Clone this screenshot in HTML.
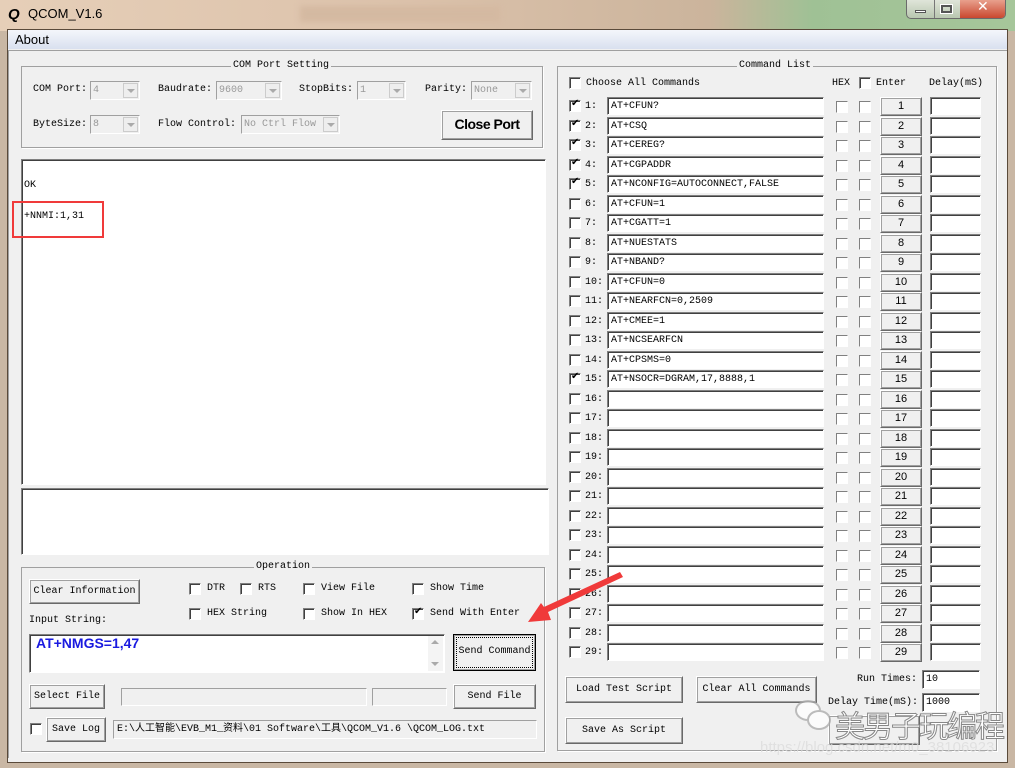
<!DOCTYPE html>
<html><head><meta charset="utf-8"><style>
*{margin:0;padding:0;box-sizing:border-box}
html,body{width:1015px;height:768px;overflow:hidden}
body{background:#c9b7a4;font-family:"Liberation Mono","WenQuanYi Zen Hei",monospace;font-size:10px;color:#000;position:relative}
.a{position:absolute;white-space:nowrap}
.grp{position:absolute;border:1px solid #a0a0a0;box-shadow:1px 1px 0 #fff}
.gt{position:absolute;top:-7px;background:#f0f0f0;padding:0 2px;line-height:12px;white-space:nowrap}
.btn{position:absolute;background:#f0f0f0;border:1px solid;border-color:#fff #696969 #696969 #fff;box-shadow:1px 1px 0 #a0a0a0 inset,inset -1px -1px 0 #a0a0a0;text-align:center;font-size:10px;white-space:nowrap}
.cb{position:absolute;width:12px;height:12px;background:#fff;border:1px solid;border-color:#808080 #fff #fff #808080;box-shadow:inset 1px 1px 0 #404040}
.cb.k::after{content:"✔";position:absolute;left:1px;top:-3px;font-size:10px;font-family:"DejaVu Sans"}
.tx{position:absolute;background:#fff;border:1px solid;border-color:#808080 #fff #fff #808080;box-shadow:inset 1px 1px 0 #404040;padding-left:3px;line-height:17px;white-space:nowrap;overflow:hidden}
.cmb{position:absolute;background:#f0f0f0;border:1px solid;border-color:#a0a0a0 #fff #fff #a0a0a0;color:#999;padding-left:2px;line-height:17px}
.cmb i{position:absolute;right:1px;top:1px;width:15px;height:15px;border:1px solid #ccc;background:#eee}
.cmb i::after{content:"";position:absolute;left:3px;top:5px;border:4px solid transparent;border-top:4px solid #aaa}
</style></head><body>
<div class="a" style="left:0;top:0;width:1015px;height:31px;background:linear-gradient(90deg,#e6cfb8,#dcc2ab 40%,#cbb49c 70%,#9fc195 80%,#a6c69a)"></div>
<div class="a" style="left:300px;top:6px;width:200px;height:16px;background:#d4b9a1;filter:blur(3px)"></div>
<div class="a" style="left:8px;top:6px;font:bold italic 15px 'Liberation Sans';color:#000">Q</div>
<div class="a" style="left:28px;top:6px;font:13px 'Liberation Sans',sans-serif">QCOM_V1.6</div>
<div class="a" style="left:906px;top:0;width:100px;height:19px;border:1px solid #6b6b6b;border-top:none;border-radius:0 0 5px 5px;background:linear-gradient(#dfe5d9,#b9c7b0);overflow:hidden">
<div class="a" style="left:27px;top:0;width:1px;height:19px;background:#777"></div>
<div class="a" style="left:53px;top:0;width:47px;height:19px;background:linear-gradient(#e8a08d,#c8432a)"></div>
<div class="a" style="left:8px;top:10px;width:11px;height:3px;background:#fff;border:1px solid #555"></div>
<div class="a" style="left:34px;top:5px;width:11px;height:8px;border:2px solid #555;outline:1px solid #fff"></div>
<div class="a" style="left:70px;top:-1px;color:#fff;font:bold 14px 'DejaVu Sans'">✕</div>
</div>
<div class="a" style="left:7px;top:29px;width:1001px;height:734px;border:1px solid #5a4a3a;background:#f0f0f0"></div>
<div class="a" style="left:8px;top:30px;width:999px;height:19px;background:linear-gradient(#f4f6fb,#d9e0ef)"></div>
<div class="a" style="left:15px;top:32px;font:13px 'Liberation Sans',sans-serif">About</div>
<div class="a" style="left:8px;top:50px;width:999px;height:708px;border-top:1px solid #a0a0a0;border-left:1px solid #a0a0a0;background:#f0f0f0"></div>

<div class="grp" style="left:21px;top:66px;width:522px;height:82px"><div class="gt" style="left:209px">COM Port Setting</div></div>
<div class="a" style="left:33px;top:84px">COM Port:</div>
<div class="cmb" style="left:90px;top:81px;width:50px;height:19px">4<i></i></div>
<div class="a" style="left:158px;top:84px">Baudrate:</div>
<div class="cmb" style="left:216px;top:81px;width:66px;height:19px">9600<i></i></div>
<div class="a" style="left:299px;top:84px">StopBits:</div>
<div class="cmb" style="left:357px;top:81px;width:49px;height:19px">1<i></i></div>
<div class="a" style="left:425px;top:84px">Parity:</div>
<div class="cmb" style="left:471px;top:81px;width:61px;height:19px">None<i></i></div>
<div class="a" style="left:33px;top:119px">ByteSize:</div>
<div class="cmb" style="left:90px;top:115px;width:50px;height:19px">8<i></i></div>
<div class="a" style="left:158px;top:119px">Flow Control:</div>
<div class="cmb" style="left:241px;top:115px;width:99px;height:19px">No Ctrl Flow<i></i></div>
<div class="btn" style="left:441px;top:110px;width:92px;height:30px;font:bold 14px 'Liberation Sans',sans-serif;line-height:27px;letter-spacing:-0.5px">Close Port</div>

<div class="tx" style="left:21px;top:159px;width:525px;height:326px"></div>
<div class="a" style="left:24px;top:180px">OK</div>
<div class="a" style="left:24px;top:211px">+NNMI:1,31</div>
<div class="a" style="left:12px;top:201px;width:92px;height:37px;border:2px solid #f03a3a"></div>
<div class="tx" style="left:21px;top:488px;width:528px;height:67px"></div>

<div class="grp" style="left:21px;top:567px;width:524px;height:185px"><div class="gt" style="left:232px">Operation</div></div>
<div class="btn" style="left:29px;top:579px;width:111px;height:25px;line-height:23px">Clear Information</div>
<div class="cb" style="left:189px;top:583px"></div><div class="a" style="left:207px;top:583px">DTR</div>
<div class="cb" style="left:240px;top:583px"></div><div class="a" style="left:258px;top:583px">RTS</div>
<div class="cb" style="left:303px;top:583px"></div><div class="a" style="left:321px;top:583px">View File</div>
<div class="cb" style="left:412px;top:583px"></div><div class="a" style="left:430px;top:583px">Show Time</div>
<div class="cb" style="left:189px;top:608px"></div><div class="a" style="left:207px;top:608px">HEX String</div>
<div class="cb" style="left:303px;top:608px"></div><div class="a" style="left:321px;top:608px">Show In HEX</div>
<div class="cb k" style="left:412px;top:608px"></div><div class="a" style="left:430px;top:608px">Send With Enter</div>
<div class="a" style="left:29px;top:615px">Input String:</div>
<div class="tx" style="left:29px;top:634px;width:416px;height:39px;line-height:20px;font:bold 14px 'Liberation Sans',sans-serif;color:#1a1ae0;padding-left:6px">AT+NMGS=1,47</div>
<div class="a" style="left:428px;top:636px;width:15px;height:35px;background:#f4f4f4"><div class="a" style="left:3px;top:4px;border:4px solid transparent;border-bottom:4px solid #aaa;border-top:none"></div><div class="a" style="left:3px;top:26px;border:4px solid transparent;border-top:4px solid #aaa;border-bottom:none"></div></div>
<div class="btn" style="left:453px;top:634px;width:83px;height:37px;line-height:33px;border:1px solid #000;outline:1px dotted #000;outline-offset:-4px">Send Command</div>
<div class="btn" style="left:29px;top:684px;width:76px;height:25px;line-height:23px">Select File</div>
<div class="tx" style="left:121px;top:688px;width:246px;height:18px;background:#f0f0f0;box-shadow:none;border-color:#a0a0a0 #fff #fff #a0a0a0"></div>
<div class="tx" style="left:372px;top:688px;width:75px;height:18px;background:#f0f0f0;box-shadow:none;border-color:#a0a0a0 #fff #fff #a0a0a0"></div>
<div class="btn" style="left:453px;top:684px;width:83px;height:25px;line-height:23px">Send File</div>
<div class="cb" style="left:30px;top:723px"></div>
<div class="btn" style="left:46px;top:717px;width:60px;height:25px;line-height:23px">Save Log</div>
<div class="tx" style="left:113px;top:720px;width:424px;height:19px;background:#f0f0f0;box-shadow:none;border-color:#a0a0a0 #fff #fff #a0a0a0;font-size:10px;line-height:17px">E:\人工智能\EVB_M1_资料\01 Software\工具\QCOM_V1.6 \QCOM_LOG.txt</div>

<div class="grp" style="left:557px;top:66px;width:440px;height:685px"><div class="gt" style="left:179px">Command List</div></div>
<div class="cb" style="left:569px;top:77px"></div><div class="a" style="left:586px;top:78px">Choose All Commands</div>
<div class="a" style="left:832px;top:78px">HEX</div>
<div class="cb" style="left:859px;top:77px"></div><div class="a" style="left:876px;top:78px">Enter</div>
<div class="a" style="left:929px;top:78px">Delay(mS)</div>
<div id="rows"></div>
<div class="btn" style="left:565px;top:676px;width:118px;height:27px;line-height:25px">Load Test Script</div>
<div class="btn" style="left:696px;top:676px;width:121px;height:27px;line-height:25px">Clear All Commands</div>
<div class="btn" style="left:565px;top:717px;width:118px;height:27px;line-height:25px">Save As Script</div>
<div class="a" style="left:857px;top:674px">Run Times:</div>
<div class="tx" style="left:922px;top:670px;width:58px;height:19px">10</div>
<div class="a" style="left:828px;top:697px">Delay Time(mS):</div>
<div class="tx" style="left:922px;top:693px;width:58px;height:19px">1000</div>
<div class="btn" style="left:828px;top:715px;width:92px;height:30px"></div>

<div class="a" style="left:795px;top:700px;width:40px;height:34px;opacity:.75">
<div class="a" style="left:0;top:0;width:26px;height:21px;border-radius:50%;border:2px solid #aaa;background:#fff"></div>
<div class="a" style="left:12px;top:10px;width:24px;height:20px;border-radius:50%;border:2px solid #aaa;background:#fff"></div></div>
<div class="a" style="left:835px;top:702px;font:30px 'WenQuanYi Zen Hei',sans-serif;color:#fff;-webkit-text-stroke:1px #888;letter-spacing:-2px">美男子玩编程</div>
<div class="a" style="left:760px;top:739px;font:15px 'Liberation Sans',sans-serif;color:#ddd;opacity:.8">https://blog.csdn.net/m0_38106923</div>

<svg class="a" style="left:0;top:0" width="1015" height="768"><polygon points="620,572 623,577 548,612 551,620 528,622 541,603 544,607" fill="#f03a3a"/></svg>

<script>
var cmds=["AT+CFUN?","AT+CSQ","AT+CEREG?","AT+CGPADDR","AT+NCONFIG=AUTOCONNECT,FALSE","AT+CFUN=1","AT+CGATT=1","AT+NUESTATS","AT+NBAND?","AT+CFUN=0","AT+NEARFCN=0,2509","AT+CMEE=1","AT+NCSEARFCN","AT+CPSMS=0","AT+NSOCR=DGRAM,17,8888,1"];
var chk=[1,2,3,4,5,15],h="";
for(var i=1;i<=29;i++){var y=Math.round(97+(i-1)*19.5);
h+='<div class="cb'+(chk.indexOf(i)>=0?' k':'')+'" style="left:569px;top:'+(y+3)+'px"></div>';
h+='<div class="a" style="left:585px;top:'+(y+4)+'px">'+i+':</div>';
h+='<div class="tx" style="left:607px;top:'+y+'px;width:217px;height:18px;line-height:18px;font-size:10px">'+(cmds[i-1]||'')+'</div>';
h+='<div class="cb" style="left:836px;top:'+(y+4)+'px;box-shadow:none"></div><div class="cb" style="left:859px;top:'+(y+4)+'px;box-shadow:none"></div>';
h+='<div class="btn" style="left:880px;top:'+y+'px;width:42px;height:19px;line-height:17px;font-family:Liberation Sans,sans-serif;font-size:11px">'+i+'</div>';
h+='<div class="tx" style="left:930px;top:'+y+'px;width:51px;height:18px"></div>';}
document.getElementById('rows').innerHTML=h;
</script>
</body></html>
